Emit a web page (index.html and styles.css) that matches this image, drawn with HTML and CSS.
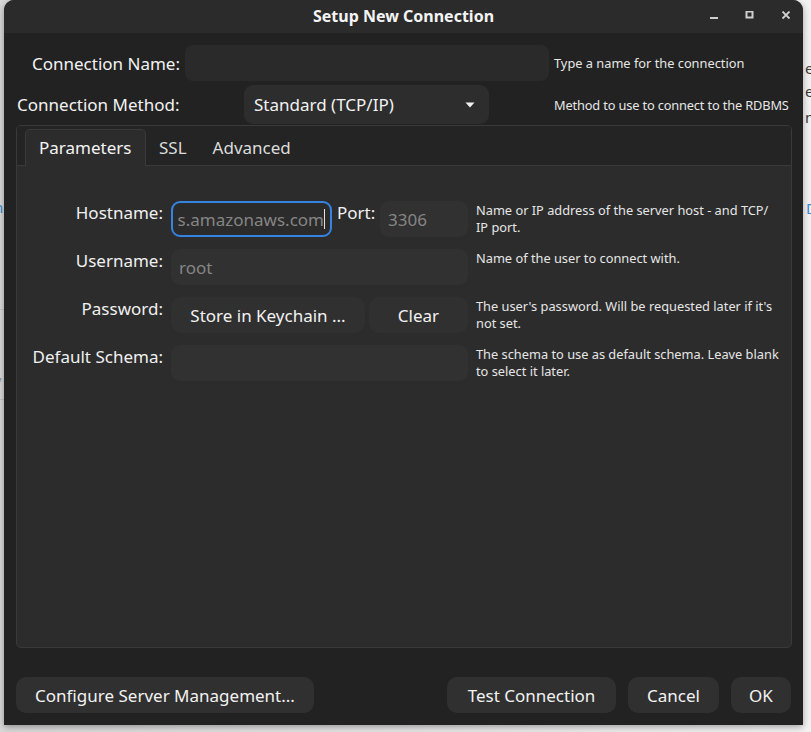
FILE: index.html
```html
<!DOCTYPE html>
<html>
<head>
<meta charset="utf-8">
<title>Setup New Connection</title>
<link rel="stylesheet" href="styles.css">
</head>
<body>
<div class="backdrop">
  <span class="frag frag-r1">e</span>
  <span class="frag frag-r2">el</span>
  <span class="frag frag-r3">n</span>
  <span class="frag frag-r4">D</span>
  <span class="frag frag-l1">n</span>
  <span class="frag frag-l2">v</span>
  <span class="bline bline-1"></span>
  <span class="bline bline-2"></span>
</div>
<div class="window">
  <div class="titlebar">
    <span class="title">Setup New Connection</span>
    <div class="controls">
      <svg class="ctl" width="10" height="10" viewBox="0 0 10 10"><rect x="1" y="6" width="8" height="2" fill="#cfcfcf"/></svg>
      <svg class="ctl" width="10" height="10" viewBox="0 0 10 10"><rect x="1.5" y="0.5" width="6" height="6" fill="none" stroke="#cfcfcf" stroke-width="2"/></svg>
      <svg class="ctl" width="10" height="10" viewBox="0 0 10 10"><path d="M1.5 0.5 L8.5 7.5 M8.5 0.5 L1.5 7.5" stroke="#cfcfcf" stroke-width="1.8"/></svg>
    </div>
  </div>
  <div class="content">
    <div class="row row-name">
      <span class="lbl-name">Connection Name:</span>
      <div class="entry entry-name"></div>
      <span class="help-top">Type a name for the connection</span>
    </div>
    <div class="row row-method">
      <span class="lbl-method">Connection Method:</span>
      <div class="combo">
        <span>Standard (TCP/IP)</span>
        <svg width="10" height="6" viewBox="0 0 10 6"><path d="M0.5 0.5 H9.5 L5 5.5 Z" fill="#f0f0f0"/></svg>
      </div>
      <span class="help-top help-method">Method to use to connect to the RDBMS</span>
    </div>
    <div class="notebook">
      <div class="tabs">
        <div class="tab tab-active">Parameters</div>
        <div class="tab">SSL</div>
        <div class="tab">Advanced</div>
      </div>
      <div class="page">
        <span class="lbl">Hostname:</span>
        <div class="host-line">
          <div class="entry-in entry-focus"><span class="clip-text">s.amazonaws.com</span><span class="caret"></span></div>
          <span class="lbl lbl-port">Port:</span>
          <div class="entry-in entry-port"><span class="ph">3306</span></div>
        </div>
        <span class="help">Name or IP address of the server host - and TCP/<br>IP port.</span>

        <span class="lbl">Username:</span>
        <div class="entry-in"><span class="ph">root</span></div>
        <span class="help">Name of the user to connect with.</span>

        <span class="lbl">Password:</span>
        <div class="pw-line">
          <div class="btn btn-store">Store in Keychain ...</div>
          <div class="btn btn-clear">Clear</div>
        </div>
        <span class="help">The user's password. Will be requested later if it's<br>not set.</span>

        <span class="lbl">Default Schema:</span>
        <div class="entry-in"></div>
        <span class="help">The schema to use as default schema. Leave blank<br>to select it later.</span>
      </div>
    </div>
    <div class="actions">
      <div class="btn btn-config">Configure Server Management...</div>
      <div class="right-actions">
        <div class="btn btn-test">Test Connection</div>
        <div class="btn btn-cancel">Cancel</div>
        <div class="btn btn-ok">OK</div>
      </div>
    </div>
  </div>
</div>
</body>
</html>
```

FILE: styles.css
```css
* { box-sizing: border-box; }

html, body {
  margin: 0;
  padding: 0;
  width: 811px;
  height: 732px;
  overflow: hidden;
}

body {
  background: #e4e4e4;
  font-family: "Noto Sans", "DejaVu Sans", sans-serif;
  color: #f2f2f2;
  position: relative;
}

.backdrop {
  position: absolute;
  inset: 0;
  background: linear-gradient(to right, #d9d9d9 0, #d9d9d9 4px, #f3f3f3 804px, #f3f3f3 811px);
}

.frag {
  position: absolute;
  font-family: "Noto Sans", sans-serif;
  font-size: 15px;
  color: #3a3a3a;
  line-height: 16px;
}
.frag-r1 { left: 805px; top: 60px; }
.frag-r2 { left: 805px; top: 83px; }
.frag-r3 { left: 805px; top: 109px; }
.frag-r4 { left: 806px; top: 200px; color: #2f8fd8; }
.frag-l1 { left: -6px; top: 199px; color: #2f8fd8; }
.frag-l2 { left: -6px; top: 372px; color: #999; }

.bline {
  position: absolute;
  left: 0;
  width: 4px;
  height: 1px;
  background: #c4c4c4;
}
.bline-1 { top: 309px; }
.bline-2 { top: 399px; }

.window {
  position: relative;
  margin-left: 4px;
  width: 799px;
  height: 725px;
  background: #222222;
  border-radius: 10px 10px 0 0;
  box-shadow: 0 2px 7px rgba(0, 0, 0, 0.35);
  display: flex;
  flex-direction: column;
}

.titlebar {
  height: 33px;
  background: #2b2b2b;
  border-radius: 10px 10px 0 0;
  display: flex;
  align-items: center;
  justify-content: center;
  position: relative;
  flex: none;
}

.title {
  font-weight: bold;
  font-size: 16px;
  color: #f4f4f4;
  line-height: 20px;
  margin-top: -2px;
}

.controls {
  position: absolute;
  right: 12px;
  top: 11px;
  display: flex;
  gap: 26px;
}
.ctl { display: block; }

.content {
  flex: 1;
  display: flex;
  flex-direction: column;
  padding: 12px 11px 12px 12px;
}

.row {
  display: flex;
  align-items: center;
  flex: none;
}
.row > * { flex: none; }

.row-name { height: 36px; }
.row-method { height: 39px; margin-top: 4px; }

.lbl-name {
  width: 164px;
  text-align: right;
  font-size: 17px;
}

.entry {
  background: #2a2a2a;
  border-radius: 8px;
  height: 36px;
}
.entry-name {
  width: 364px;
  margin-left: 5px;
}

.help-top {
  font-size: 12.8px;
  color: #e6e6e6;
  margin-left: 5px;
  white-space: nowrap;
}

.lbl-method {
  width: 228px;
  padding-left: 1px;
  font-size: 17px;
}

.combo {
  width: 245px;
  height: 39px;
  background: #2d2d2d;
  border-radius: 9px;
  display: flex;
  align-items: center;
  justify-content: space-between;
  padding: 0 14px 0 10px;
  font-size: 17px;
}
.combo svg { display: block; }

.help-method {
  margin-left: 65px;
  letter-spacing: -0.15px;
}

.notebook {
  flex: 1;
  margin-top: 1px;
  background: #2c2c2c;
  border: 1px solid #3a3a3a;
  border-radius: 5px;
  display: flex;
  flex-direction: column;
  overflow: hidden;
}

.tabs {
  height: 40px;
  flex: none;
  background: #242424;
  border-bottom: 1px solid #3a3a3a;
  display: flex;
  align-items: flex-end;
  padding-left: 8px;
}

.tab {
  height: 36px;
  padding: 0 13px;
  font-size: 17px;
  color: #dcdcdc;
  display: flex;
  align-items: center;
}

.tab-active {
  width: 121px;
  background: #2c2c2c;
  border: 1px solid #3a3a3a;
  border-bottom: none;
  border-radius: 5px 5px 0 0;
  color: #f4f4f4;
  margin-bottom: -1px;
  height: 37px;
  padding-bottom: 1px;
}

.page {
  flex: 1;
  display: grid;
  grid-template-columns: 145px 298px 1fr;
  grid-auto-rows: 36px;
  column-gap: 8px;
  row-gap: 12px;
  padding-top: 35px;
  align-content: start;
}

.lbl {
  font-size: 17px;
  line-height: 24px;
  text-align: right;
  color: #f0f0f0;
  align-self: start;
}

.page > .lbl { margin-right: -1px; }

.host-line, .pw-line {
  display: flex;
  height: 36px;
  margin-left: 1px;
}

.page > .entry-in { margin-left: 1px; }

.entry-in {
  background: #313131;
  border-radius: 9px;
  height: 36px;
  display: flex;
  align-items: center;
  padding: 0 8px;
  font-size: 17px;
}

.ph { color: #858585; }

.entry-focus {
  width: 161px;
  flex: none;
  background: #2b2b2b;
  border: 2px solid #3584e4;
  justify-content: flex-end;
  overflow: hidden;
  padding: 0 5px 0 2px;
}

.clip-text {
  color: #858585;
  white-space: nowrap;
  flex: none;
}

.caret {
  width: 1px;
  height: 20px;
  background: #e0e0e0;
  flex: none;
}

.lbl-port {
  margin-left: 5px;
  width: 39px;
  text-align: left;
}

.entry-port {
  margin-left: 4px;
  flex: 1;
}

.help {
  font-size: 12.8px;
  line-height: 17px;
  color: #e6e6e6;
  align-self: start;
  margin-top: 1px;
  white-space: nowrap;
}

.btn {
  background: #303030;
  border-radius: 10px;
  height: 36px;
  display: flex;
  align-items: center;
  justify-content: center;
  font-size: 17px;
  color: #f2f2f2;
  white-space: nowrap;
}

.btn-store { width: 194px; }
.btn-clear { width: 99px; margin-left: 4px; }

.actions {
  flex: none;
  margin-top: 29px;
  height: 36px;
  display: flex;
  justify-content: space-between;
  padding-right: 1px;
}

.right-actions {
  display: flex;
  gap: 12px;
}

.btn-config { width: 298px; }
.btn-test { width: 169px; }
.btn-cancel { width: 91px; }
.btn-ok { width: 60px; }
```
